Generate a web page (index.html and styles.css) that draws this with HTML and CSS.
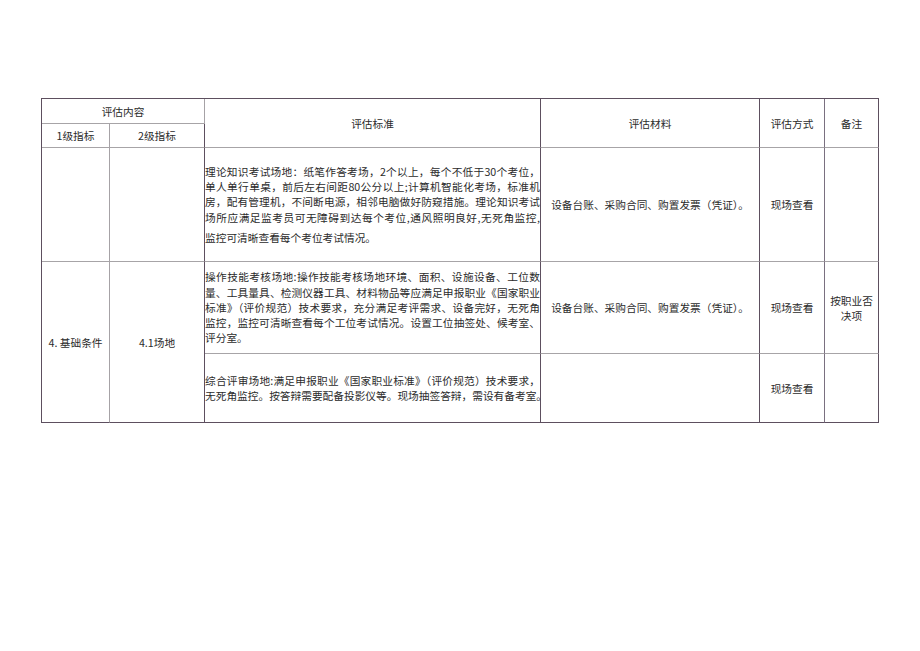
FILE: index.html
```html
<!DOCTYPE html>
<html lang="zh-CN">
<head>
<meta charset="utf-8">
<link rel="stylesheet" href="styles.css">
</head>
<body>
<table class="sheet">
  <colgroup>
    <col class="c1"><col class="c2"><col class="c3"><col class="c4"><col class="c5"><col class="c6">
  </colgroup>
  <tr class="h1">
    <th colspan="2" class="light-r">评估内容</th>
    <th rowspan="2" class="dark-r">评估标准</th>
    <th rowspan="2" class="dark-r">评估材料</th>
    <th rowspan="2">评估方式</th>
    <th rowspan="2" class="edge-r">备注</th>
  </tr>
  <tr class="h2">
    <th class="light-r">1级指标</th>
    <th class="dark-r">2级指标</th>
  </tr>
  <tr class="r1">
    <td class="light-r"></td>
    <td class="dark-r"></td>
    <td class="dark-r std">
      <div class="para">
        <span class="ln">理论知识考试场地：纸笔作答考场，2个以上，每个不低于30个考位，</span>
        <span class="ln">单人单行单桌，前后左右间距80公分以上;计算机智能化考场，标准机</span>
        <span class="ln">房，配有管理机，不间断电源，相邻电脑做好防窥措施。理论知识考试</span>
        <span class="ln">场所应满足监考员可无障碍到达每个考位,通风照明良好,无死角监控,</span>
        <span class="ln last gap">监控可清晰查看每个考位考试情况。</span>
      </div>
    </td>
    <td class="dark-r">设备台账、采购合同、购置发票（凭证）。</td>
    <td>现场查看</td>
    <td class="edge-r"></td>
  </tr>
  <tr class="r2">
    <td rowspan="2" class="light-r bottom">4. 基础条件</td>
    <td rowspan="2" class="dark-r bottom">4.1场地</td>
    <td class="dark-r std">
      <div class="para">
        <span class="ln">操作技能考核场地:操作技能考核场地环境、面积、设施设备、工位数</span>
        <span class="ln">量、工具量具、检测仪器工具、材料物品等应满足申报职业《国家职业</span>
        <span class="ln">标准》（评价规范）技术要求，充分满足考评需求、设备完好，无死角</span>
        <span class="ln">监控，监控可清晰查看每个工位考试情况。设置工位抽签处、候考室、</span>
        <span class="ln last">评分室。</span>
      </div>
    </td>
    <td class="dark-r">设备台账、采购合同、购置发票（凭证）。</td>
    <td>现场查看</td>
    <td class="edge-r note">按职业否决项</td>
  </tr>
  <tr class="r3">
    <td class="dark-r std bottom">
      <div class="para">
        <span class="ln">综合评审场地:满足申报职业《国家职业标准》（评价规范）技术要求，</span>
        <span class="ln">无死角监控。按答辩需要配备投影仪等。现场抽签答辩，需设有备考室。</span>
      </div>
    </td>
    <td class="dark-r bottom"></td>
    <td class="bottom">现场查看</td>
    <td class="edge-r bottom"></td>
  </tr>
</table>
</body>
</html>
```

FILE: styles.css
```css
html, body {
  margin: 0;
  padding: 0;
  background: #ffffff;
}

body {
  font-family: "Noto Sans CJK SC", "Noto Sans", sans-serif;
  font-size: 10.7px;
  color: #2b2b2b;
}

.sheet {
  margin: 98px 0 0 41px;
  width: 838px;
  table-layout: fixed;
  border-collapse: separate;
  border-spacing: 0;
  border-top: 1px solid #5d4f5f;
  border-left: 1px solid #5d4f5f;
}

.c1 { width: 68px; }
.c2 { width: 95px; }
.c3 { width: 336px; }
.c4 { width: 219px; }
.c5 { width: 65px; }
.c6 { width: 54px; }

.sheet th,
.sheet td {
  padding: 0;
  font-weight: 400;
  text-align: center;
  vertical-align: middle;
  line-height: 15px;
  border-right: 1px solid #7a7080;
  border-bottom: 1px solid #a7a4a7;
  overflow: visible;
}

.sheet .light-r { border-right-color: #a6a2a6; }
.sheet .dark-r { border-right-color: #5d4f5f; }
.sheet .edge-r { border-right-color: #5d4f5f; }
.sheet .bottom { border-bottom-color: #5d4f5f; }

.h1 { height: 25px; }
.h2 { height: 24px; }
.r1 { height: 114px; }
.r2 { height: 92px; }
.r3 { height: 69px; }

.std {
  text-align: justify;
}

.para {
  display: flex;
  flex-direction: column;
}

.ln {
  display: block;
  white-space: nowrap;
  text-align: justify;
  text-align-last: justify;
  line-height: 15.3px;
}

.ln.last {
  text-align-last: left;
}

.ln.gap {
  margin-top: 5px;
}

.note {
  line-height: 17px;
  padding: 0 1px;
}
```
